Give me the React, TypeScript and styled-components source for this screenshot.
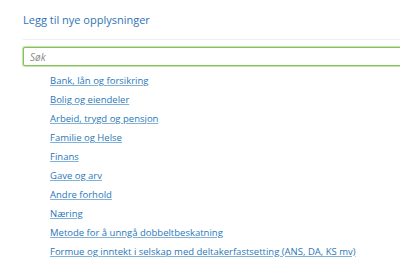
import styled, { createGlobalStyle } from 'styled-components';

const categories = [
  'Bank, lån og forsikring',
  'Bolig og eiendeler',
  'Arbeid, trygd og pensjon',
  'Familie og Helse',
  'Finans',
  'Gave og arv',
  'Andre forhold',
  'Næring',
  'Metode for å unngå dobbeltbeskatning',
  'Formue og inntekt i selskap med deltakerfastsetting (ANS, DA, KS mv)',
];

const GlobalStyle = createGlobalStyle`
  body {
    margin: 0;
    background: #fff;
    font-family: "Open Sans", "Liberation Sans", sans-serif;
  }
`;

const App = (): JSX.Element => {
  return (
    <>
      <GlobalStyle />
      <Page>
        <Container>
          <Title>Legg til nye opplysninger</Title>
          <Divider />
          <SearchInput placeholder="Søk" />
          <LinkList>
            {categories.map(item => (
              <li key={item}>
                <CategoryLink href="#">{item}</CategoryLink>
              </li>
            ))}
          </LinkList>
        </Container>
      </Page>
    </>
  );
};

export default App;

const Page = styled.div`
  width: 400px;
  height: 275px;
  overflow: hidden;
`;

const Container = styled.div`
  width: 400px;
  padding: 12px 0 0 23px;
`;

const Title = styled.h2`
  margin: 0;
  font-size: 11px;
  font-weight: 400;
  line-height: 16px;
  color: #2f74b5;
`;

const Divider = styled.div`
  margin-top: 11px;
  height: 1px;
  background: #efefef;
`;

const SearchInput = styled.input`
  display: block;
  box-sizing: border-box;
  margin-top: 7px;
  width: 100%;
  height: 19px;
  padding: 0 6px;
  border: 1px solid #86c25a;
  border-radius: 2px;
  box-shadow: 0 0 0 1px #c4e3ad;
  font-family: "Open Sans", "Liberation Sans", sans-serif;
  font-size: 10px;
  font-style: italic;
  outline: none;
  &::placeholder {
    color: #8a8a8a;
  }
`;

const LinkList = styled.ul`
  list-style: none;
  margin: 3px 0 0;
  padding: 0 0 0 27px;
  li {
    height: 19px;
    line-height: 19px;
  }
`;

const CategoryLink = styled.a`
  font-size: 9.5px;
  color: #2a78b8;
  text-decoration: underline;
  text-decoration-color: #7fb3dc;
`;
